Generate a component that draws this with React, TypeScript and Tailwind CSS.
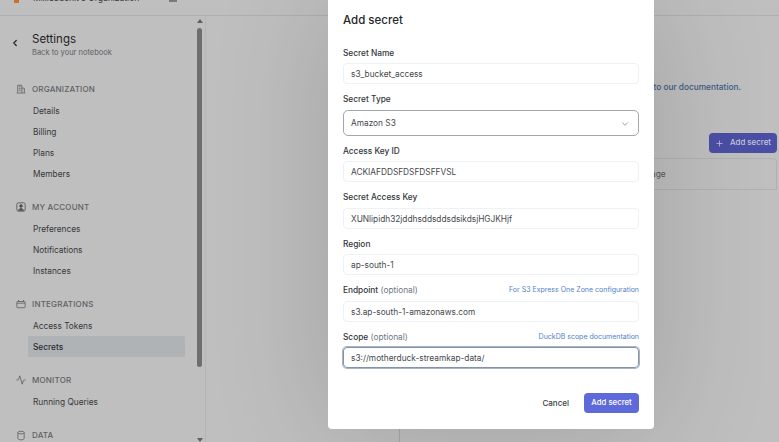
import { Activity, ChevronDown, ChevronLeft, Plus } from "lucide-react";
import type { ReactNode } from "react";

function OrgIcon() {
  return (
    <svg width="10" height="10" viewBox="0 0 12 12" fill="none" stroke="#5f6163" strokeWidth="1">
      <path d="M2 10.500V1.500h5v9M7 5h3v5.500M.8 10.800h10.400M3.500 3.500h2M3.500 5.500h2M3.500 7.500h2" />
    </svg>
  );
}

function AccountIcon() {
  return (
    <svg width="10" height="10" viewBox="0 0 12 12" fill="none" stroke="#4f5153" strokeWidth="1">
      <rect x="1" y="1" width="10" height="10" rx="2" />
      <circle cx="6" cy="4.800" r="1.600" fill="#4f5153" />
      <path d="M3 10.500c.5-2 1.600-2.600 3-2.600s2.500.6 3 2.600" fill="#4f5153" />
    </svg>
  );
}

function PlugIcon() {
  return (
    <svg width="10" height="10" viewBox="0 0 12 12" fill="none" stroke="#5f6163" strokeWidth="1">
      <rect x="1" y="3" width="10" height="7.500" rx="1" />
      <path d="M3 3V1.200M9 3V1.200M1 5h10" />
    </svg>
  );
}

function CylinderIcon() {
  return (
    <svg width="10" height="11" viewBox="0 0 12 13" fill="none" stroke="#5f6163" strokeWidth="1">
      <ellipse cx="6" cy="3" rx="3.800" ry="1.600" />
      <path d="M2.200 3v7c0 1 1.700 1.700 3.800 1.700s3.800-.7 3.800-1.700V3" />
    </svg>
  );
}

const sections: { title: string; icon: ReactNode; items: string[] }[] = [
  { title: "ORGANIZATION", icon: <OrgIcon />, items: ["Details", "Billing", "Plans", "Members"] },
  { title: "MY ACCOUNT", icon: <AccountIcon />, items: ["Preferences", "Notifications", "Instances"] },
  { title: "INTEGRATIONS", icon: <PlugIcon />, items: ["Access Tokens", "Secrets"] },
  { title: "MONITOR", icon: <Activity size={10} color="#5f6163" />, items: ["Running Queries"] },
  { title: "DATA", icon: <CylinderIcon />, items: [] },
];

function Sidebar() {
  return (
    <aside className="relative flex h-full w-[206px] shrink-0 flex-col overflow-hidden border-r border-[#b4b5b6]">
      <div className="flex items-start pl-[10px] pt-[16px]">
        <ChevronLeft size={10} strokeWidth={3} color="#26282b" className="mt-[6px]" />
        <div className="ml-[12px]">
          <div className="text-[11.500px] leading-[14px] text-[#1f2226]">Settings</div>
          <div className="mt-[2px] text-[7.500px] leading-[10px] text-[#5c6064]">Back to your notebook</div>
        </div>
      </div>
      <div className="mt-[24px] flex flex-col gap-[16.500px]">
        {sections.map((section) => (
          <div key={section.title}>
            <div className="flex h-[14px] items-center pl-[16px]">
              <span className="flex w-[16px]">{section.icon}</span>
              <span className="text-[8px] font-medium tracking-[0.2px] text-[#5e6165]">{section.title}</span>
            </div>
            <div className="mt-[3.500px] flex flex-col">
              {section.items.map((item) => (
                <div
                  key={item}
                  className={
                    item === "Secrets"
                      ? "ml-[28px] flex h-[21px] w-[157px] items-center rounded-[1px] bg-[#afb3b6] pl-[5px] pt-[2px] text-[8.300px] font-medium text-[#2a2d30]"
                      : "ml-[28px] flex h-[21px] items-center pl-[5px] pt-[2px] text-[8.300px] text-[#35383b]"
                  }
                >
                  {item}
                </div>
              ))}
            </div>
          </div>
        ))}
      </div>
      <div className="absolute right-[3px] top-[3px] flex h-[423px] w-[5px] flex-col items-center">
        <div className="h-0 w-0 border-x-[3px] border-b-[4px] border-x-transparent border-b-[#5f5f5f]" />
        <div className="mt-[5px] h-[339px] w-[5px] rounded-full bg-[#6e6e6e]" />
        <div className="mt-auto h-0 w-0 border-x-[3px] border-t-[4px] border-x-transparent border-t-[#5f5f5f]" />
      </div>
    </aside>
  );
}

function Field({ label, hint, link, value, focused }: { label: string; hint?: string; link?: string; value: string; focused?: boolean }) {
  return (
    <div>
      <div className="flex h-[12px] items-center justify-between pt-[2px]">
        <span className="text-[8.300px] font-medium text-[#33363a]">
          {label}
          {hint && <span className="font-normal text-[#6d7886]"> {hint}</span>}
        </span>
        {link && <span className="text-[7px] text-[#4f7fc4]">{link}</span>}
      </div>
      <div
        className={
          focused
            ? "mt-[5px] flex h-[21px] items-center rounded-[4px] border border-[#8393aa] pl-[7px] pt-[2px] text-[8.300px] text-[#45484c] shadow-[0_0_0_1px_#a9b4c4]"
            : "mt-[5px] flex h-[21px] items-center rounded-[4px] border border-[#eef1f5] pl-[7px] pt-[2px] text-[8.300px] text-[#45484c]"
        }
      >
        {value}
      </div>
    </div>
  );
}

export default function App() {
  return (
    <div className="relative h-[442px] w-[779px] overflow-hidden bg-[#bfbfbf] font-['Inter',sans-serif]">
      <div className="flex h-[16px] items-start border-b border-[#adb0b3] pl-[14px]">
        <span className="h-[3px] w-[5px] bg-[#c8702c]" />
        <span className="-mt-[8px] ml-[14px] text-[8.500px] text-[#35383b]">MillieSachit's Organization</span>
        <span className="ml-[30px] h-[2px] w-[8px] bg-[#77797b]" />
      </div>
      <div className="flex h-[426px]">
        <Sidebar />
        <main className="flex flex-1">
          <div className="w-[194px] shrink-0 border-r border-[#a8a8a8]" />
          <div className="relative flex-1">
            <p className="absolute right-[38px] top-[65px] text-[8.300px] font-medium text-[#3b5a85]">to our documentation.</p>
            <button className="absolute right-[2px] top-[117px] flex h-[20px] w-[68px] items-center justify-center gap-[6px] rounded-[4px] bg-[#4a4fa5] text-[7.900px] font-medium text-[#c5c6de]">
              <Plus size={9} /> Add secret
            </button>
            <div className="absolute right-[2px] top-[142px] h-[32px] w-[130px] rounded-t-[4px] border border-[#b1b1b1]">
              <span className="absolute left-[3px] top-[9px] text-[8.300px] text-[#55585c]">age</span>
            </div>
          </div>
        </main>
      </div>
      <div className="absolute left-[328px] top-0 flex h-[429px] w-[326px] flex-col rounded-b-[4px] bg-white px-[15px] shadow-[0_0_120px_rgba(0,0,0,0.16)]">
        <h2 className="mt-[13px] text-[11.500px] font-medium leading-[15px] text-[#25282b]">Add secret</h2>
        <div className="mt-[18px] flex flex-col gap-[8.500px]">
          <Field label="Secret Name" value="s3_bucket_access" />
          <div>
            <div className="flex h-[12px] items-center pt-[2px] text-[8.300px] font-medium text-[#33363a]">Secret Type</div>
            <div className="mt-[5px] flex h-[26px] items-center justify-between rounded-[5px] border border-[#a3a8ae] pl-[7px] pr-[8px] pt-[2px] text-[8.300px] text-[#45484c]">
              Amazon S3
              <ChevronDown size={10} color="#8a8f95" />
            </div>
          </div>
          <Field label="Access Key ID" value="ACKIAFDDSFDSFDSFFVSL" />
          <Field label="Secret Access Key" value="XUNlipidh32jddhsddsddsdsikdsjHGJKHjf" />
          <Field label="Region" value="ap-south-1" />
          <Field label="Endpoint" hint="(optional)" link="For S3 Express One Zone configuration" value="s3.ap-south-1-amazonaws.com" />
          <Field label="Scope" hint="(optional)" link="DuckDB scope documentation" value="s3://motherduck-streamkap-data/" focused />
        </div>
        <div className="mt-[25px] flex items-center justify-end gap-[15px]">
          <span className="text-[8px] font-medium text-[#3a3d41]">Cancel</span>
          <button className="flex h-[20px] w-[55px] items-center justify-center rounded-[4px] bg-[#5f6ada] text-[7.800px] font-medium text-white">
            Add secret
          </button>
        </div>
      </div>
    </div>
  );
}
